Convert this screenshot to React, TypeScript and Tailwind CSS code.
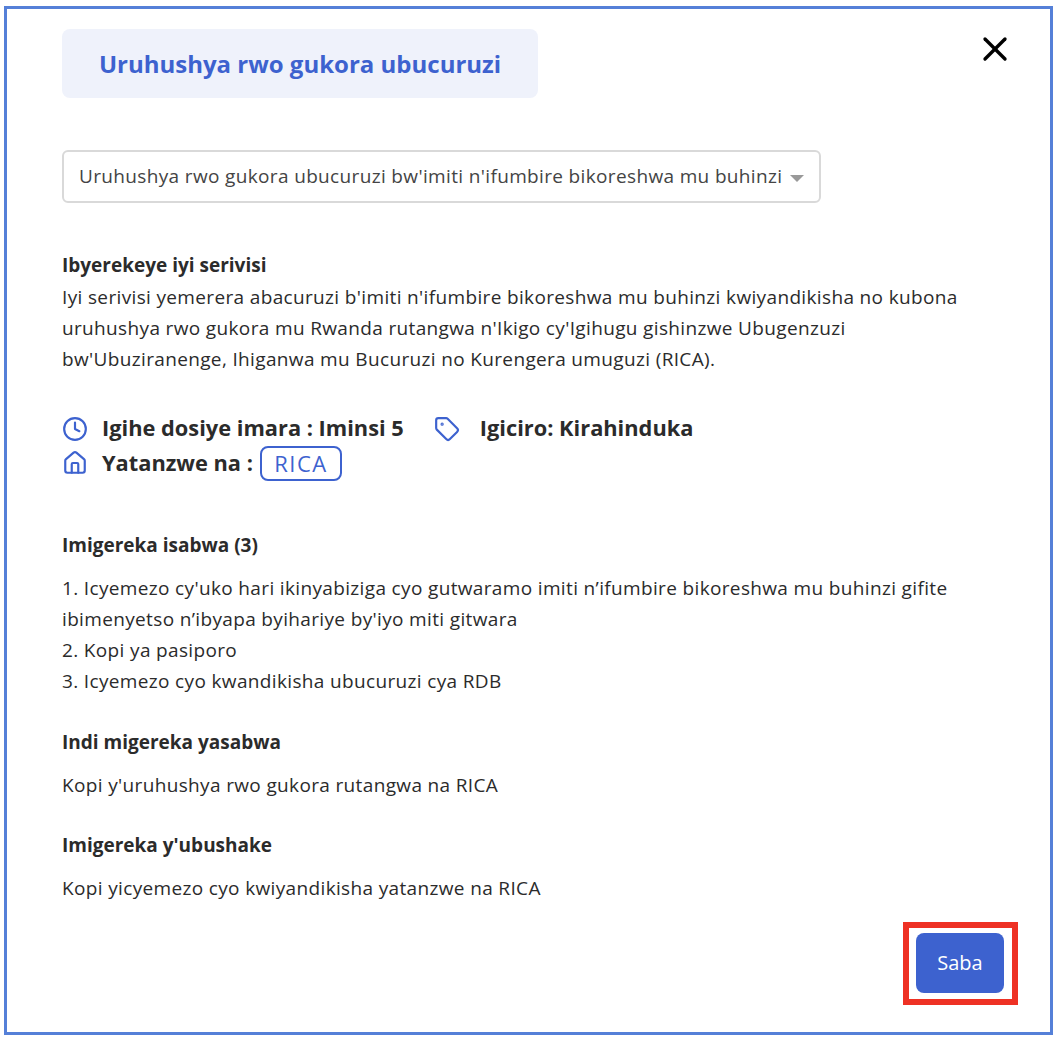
import { Clock, Home, Tag, X } from 'lucide-react'

const requirements = [
  "1. Icyemezo cy'uko hari ikinyabiziga cyo gutwaramo imiti n’ifumbire bikoreshwa mu buhinzi gifite ibimenyetso n’ibyapa byihariye by'iyo miti gitwara",
  '2. Kopi ya pasiporo',
  '3. Icyemezo cyo kwandikisha ubucuruzi cya RDB',
]

function App() {
  return (
    <div className="h-[1042px] bg-white pt-[6px] pr-[5px] pb-[7px] pl-[4px] font-['Open_Sans',sans-serif] text-[#2b2b2b]">
      <div className="flex h-[1029px] flex-col border-[3px] border-[#5580d8] pr-[44px] pl-[55px]">
        <div className="mt-[20px] flex items-start justify-between">
          <div className="flex h-[69px] w-[476px] items-center justify-center rounded-lg bg-[#eff2fb] text-[24px] font-bold text-[#3d62cf]">
            Uruhushya rwo gukora ubucuruzi
          </div>
          <X className="-mr-[9px] h-[40px] w-[40px] text-black" strokeWidth={2} />
        </div>

        <div className="mt-[52px] flex h-[53px] w-[759px] items-center justify-between rounded-md border-2 border-[#d9d9d9] pr-[15px] pl-[15px] text-[19px] tracking-[0.35px] text-[#444]">
          <span>Uruhushya rwo gukora ubucuruzi bw'imiti n'ifumbire bikoreshwa mu buhinzi</span>
          <span className="mt-[3px] h-0 w-0 border-x-[7px] border-t-[7px] border-x-transparent border-t-[#999]" />
        </div>

        <div className="mt-[47px] text-[19px] leading-[31px] tracking-[0.35px]">
          <h3 className="font-bold tracking-normal">Ibyerekeye iyi serivisi</h3>
          <p className="mt-[1px] w-[900px]">
            Iyi serivisi yemerera abacuruzi b'imiti n'ifumbire bikoreshwa mu buhinzi kwiyandikisha no kubona uruhushya rwo gukora mu Rwanda rutangwa n'Ikigo cy'Igihugu gishinzwe Ubugenzuzi bw'Ubuziranenge, Ihiganwa mu Bucuruzi no Kurengera umuguzi (RICA).
          </p>
        </div>

        <div className="mt-[37px] flex flex-col text-[21.8px] font-bold">
          <div className="flex h-[33px] items-center">
            <Clock className="h-[26px] w-[26px] text-[#3d62cf]" strokeWidth={2} />
            <span className="ml-[14px]">Igihe dosiye imara : Iminsi 5</span>
            <Tag className="ml-[30px] h-[26px] w-[26px] text-[#3d62cf]" strokeWidth={2} />
            <span className="ml-[20px]">Igiciro: Kirahinduka</span>
          </div>
          <div className="flex h-[36px] items-center">
            <Home className="h-[26px] w-[26px] text-[#3d62cf]" strokeWidth={2} />
            <span className="ml-[14px]">Yatanzwe na :</span>
            <span className="ml-[7px] flex h-[35px] w-[82px] items-center justify-center rounded-lg border-2 border-[#3d62cf] text-[22px] font-normal tracking-[1.5px] text-[#3d62cf]">
              RICA
            </span>
          </div>
        </div>

        <div className="mt-[49px] text-[19px] leading-[31px] tracking-[0.35px]">
          <h3 className="font-bold tracking-normal">Imigereka isabwa (3)</h3>
          <ul className="mt-[12px] w-[900px]">
            {requirements.map((r) => (
              <li key={r}>{r}</li>
            ))}
          </ul>
          <h3 className="mt-[30px] font-bold tracking-normal">Indi migereka yasabwa</h3>
          <p className="mt-[12px]">Kopi y'uruhushya rwo gukora rutangwa na RICA</p>
          <h3 className="mt-[29px] font-bold tracking-normal">Imigereka y'ubushake</h3>
          <p className="mt-[12px]">Kopi yicyemezo cyo kwiyandikisha yatanzwe na RICA</p>
        </div>

        <div className="mt-auto mb-[27px] flex justify-end">
          <div className="-mr-[12px] border-[6px] border-[#ee3124] pt-[5px] pr-[8px] pb-[6px] pl-[7px]">
            <button className="block h-[60px] w-[88px] rounded-lg bg-[#3d62cf] text-[20px] text-white">Saba</button>
          </div>
        </div>
      </div>
    </div>
  )
}

export default App
